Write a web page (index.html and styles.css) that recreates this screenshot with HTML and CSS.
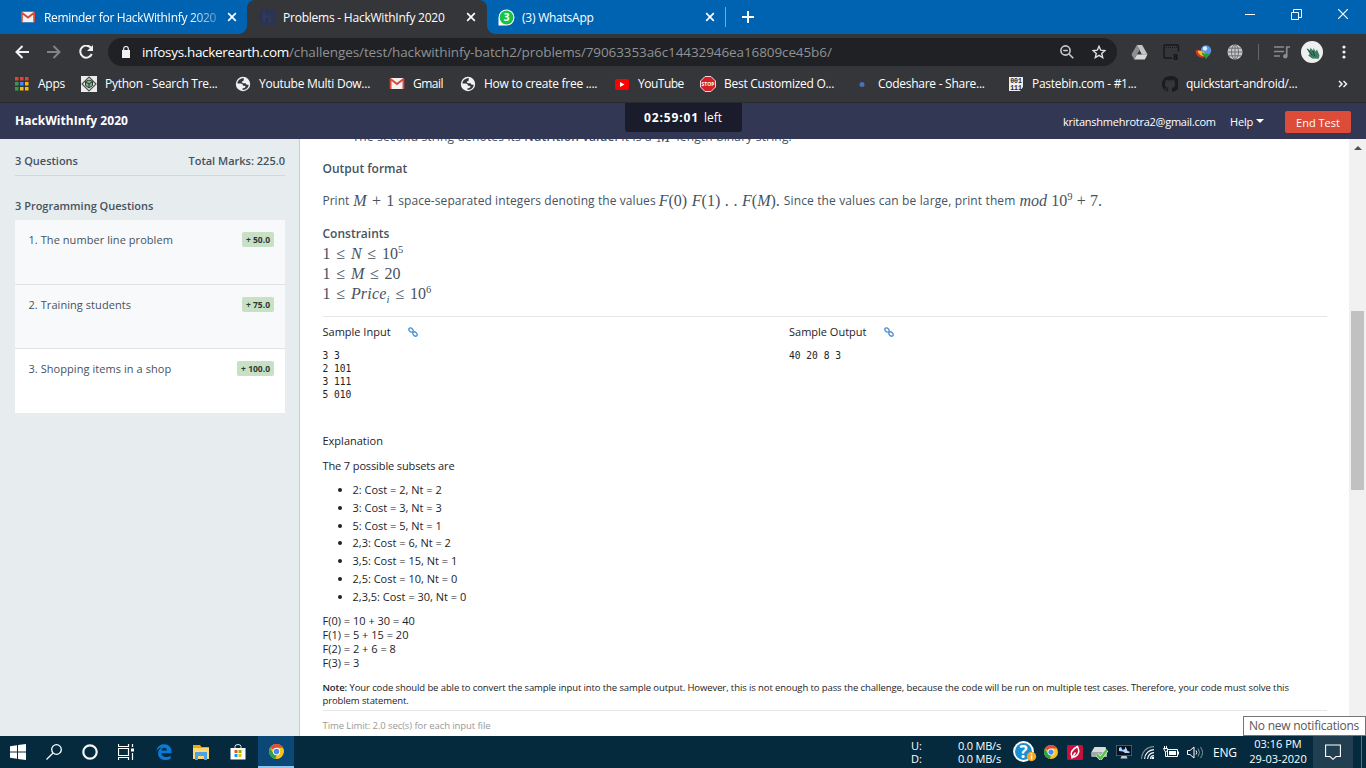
FILE: index.html
```html
<!DOCTYPE html>
<html lang="en">
<head>
<meta charset="utf-8">
<title>Problems - HackWithInfy 2020</title>
<link rel="stylesheet" href="styles.css">
</head>
<body>
<svg class="defs" width="0" height="0">
  <symbol id="gmail" viewBox="0 0 16 12"><path fill="#f2f2f2" d="M1 0h14v12H1z"/><path fill="#d54b3d" d="M0 1.2C0 .5.6 0 1.2 0L8 5.2 14.8 0c.7 0 1.2.5 1.2 1.2V12h-2V3.4L8 8 2 3.4V12H0z"/></symbol>
  <symbol id="x" viewBox="0 0 10 10"><path d="M1.2 1.2l7.6 7.6M8.8 1.2L1.2 8.8" stroke="#fff" stroke-width="1.7"/></symbol>
  <symbol id="globe" viewBox="0 0 16 16"><circle cx="8" cy="8" r="7.2" fill="#f1f1f1"/><path fill="#35363a" d="M9 2.2C5.500 1.800 2.500 4.200 2.400 7.500l3.200.1c1.600 0 2.300.8 2.300 2.100h1.500c1.300 0 1.500 1.500.3 2l-2.200.9v1.300c3.300.1 5.900-2 6.200-5.200-1.500.5-2.700-.3-3-1.500H8.200C6.300 7 6.500 5.500 7.700 5.300 8.900 5.100 8.500 3.400 9 2.200z"/></symbol>
  <symbol id="chrome" viewBox="0 0 16 16"><circle cx="8" cy="8" r="8" fill="#fbc116"/><path fill="#e24a3b" d="M8 8L1.100 4A8 8 0 0 1 14.900 4H8z"/><path fill="#2ba24c" d="M1.100 4L4.600 10 8 12 6.800 15.900A8 8 0 0 1 1.100 4z"/><circle cx="8" cy="8" r="3.900" fill="#fff"/><circle cx="8" cy="8" r="3" fill="#4688f1"/></symbol>
  <symbol id="link" viewBox="0 0 10 10"><g fill="none" stroke="#4b92d8" stroke-width="1.300"><ellipse cx="3" cy="3" rx="2.500" ry="1.700" transform="rotate(45 3 3)"/><ellipse cx="7" cy="7" rx="2.500" ry="1.700" transform="rotate(45 7 7)"/></g></symbol>
</svg>

<div class="titlebar">
  <div class="tab tab-first"><svg class="fav" width="14" height="12"><use href="#gmail"/></svg><span class="ui fade">Reminder for HackWithInfy 2020</span><svg class="close" width="10" height="10"><use href="#x"/></svg></div>
  <div class="tab tab-active"><svg class="fav" width="16" height="16" viewBox="0 0 16 16"><path fill="#2c3454" d="M0 0h16v16H0z"/><path d="M5 3v10M5 8q6-2 6 1v4" stroke="#353a5c" stroke-width="2" fill="none"/></svg><span class="ui">Problems - HackWithInfy 2020</span><svg class="close" width="10" height="10"><use href="#x"/></svg></div>
  <div class="tab tab-wa"><svg class="fav" width="17" height="17" viewBox="0 0 17 17"><path fill="#fff" d="M.5 16.500V8.500a8 8 0 1 1 8 8z"/><circle cx="8.500" cy="8.500" r="6.900" fill="#19c345"/><text x="8.500" y="12.200" text-anchor="middle" class="wa-count">3</text></svg><span class="ui">(3) WhatsApp</span><svg class="close" width="10" height="10"><use href="#x"/></svg></div>
  <span class="tab-sep"></span>
  <svg class="newtab" width="12" height="12" viewBox="0 0 12 12"><path d="M6 0v12M0 6h12" stroke="#fff" stroke-width="2"/></svg>
  <div class="winctl">
    <svg width="10" height="10"><path d="M0 5.500h10" stroke="#fff"/></svg>
    <svg width="11" height="11"><path d="M.5 3.500h7v7h-7zM2.500 3.500v-3h8v8h-3" fill="none" stroke="#fff"/></svg>
    <svg width="10" height="10"><path d="M0 0l10 10M10 0L0 10" stroke="#fff" stroke-width="1.200"/></svg>
  </div>
</div>

<div class="toolbar">
  <svg width="14" height="14" viewBox="0 0 14 14"><path d="M14 7H1.500M7.500 1L1.500 7l6 6" fill="none" stroke="#f1f1f1" stroke-width="2"/></svg>
  <svg class="fwd" width="14" height="14" viewBox="0 0 14 14"><path d="M0 7h12.500M6.500 1l6 6-6 6" fill="none" stroke="#828386" stroke-width="2"/></svg>
  <svg class="reload" width="15" height="14" viewBox="0 0 15 14"><path d="M12.300 3.300A6 6 0 1 0 12.800 9" fill="none" stroke="#f1f1f1" stroke-width="2"/><path d="M14 0v6H8z" fill="#f1f1f1"/></svg>
  <div class="omnibox">
    <svg width="10" height="12" viewBox="0 0 10 12"><path fill="#f1f1f1" d="M1 4h8v8H1z"/><path d="M2.700 4.500V2.800a2.300 2.300 0 0 1 4.600 0v1.700" fill="none" stroke="#f1f1f1" stroke-width="1.200"/></svg>
    <span class="url"><span class="host">infosys.hackerearth.com</span><span class="path">/challenges/test/hackwithinfy-batch2/problems/79063353a6c14432946ea16809ce45b6/</span></span>
    <svg class="zoomi" width="14" height="14" viewBox="0 0 14 14" fill="none" stroke="#c8c9ca" stroke-width="1.600"><circle cx="5.500" cy="5.500" r="4.600"/><path d="M9 9l4.300 4.300M3.200 5.500h4.600"/></svg>
    <svg width="14" height="14" viewBox="0 0 14 14"><path d="M7 1.300l1.700 3.900 4.200.4-3.200 2.800 1 4.200L7 10.400l-3.700 2.200 1-4.200L1.100 5.600l4.200-.4z" fill="none" stroke="#e0e0e0" stroke-width="1.400"/></svg>
  </div>
  <div class="exts">
    <svg width="17" height="15" viewBox="0 0 17 15"><path fill="#c4c4c4" d="M5.800 0h5.400l5.300 9.500h-5.600z"/><path fill="#8e8e8e" d="M5.800 0L.5 9.500 3.200 14.500 8.500 5z"/><path fill="#d8d8d8" d="M6 9.500h10.500l-2.700 5H3.200z"/></svg>
    <svg width="17" height="16" viewBox="0 0 17 16"><rect x="1" y="1" width="14.500" height="13" rx="1" fill="none" stroke="#17181a" stroke-width="1.400"/><path d="M3 3.500h11" stroke="#17181a" stroke-dasharray="1 1"/><path fill="#35363a" d="M9 7.500h8V16H9z"/><text x="10" y="15.700" class="ext8">8</text></svg>
    <svg width="17" height="15" viewBox="0 0 17 15"><circle cx="11" cy="5.500" r="5.200" fill="#5b93dd"/><circle cx="10" cy="3.500" r="2.200" fill="#d8ecff"/><path d="M9.500 12.500C4 13.500 0 9 .8 5.500 3.500 3.800 6 5.500 8 9" fill="#d83422"/><path d="M11 11.500C6 11.500 3 8.500 2.800 6 6 4.800 9 7.500 11 9" fill="#f1c929"/><path d="M6.500 7.500c1.500.5 2.500 1 4 1l5 .5-4.800 5.300-.7-2.800C8 11 7 9.500 6.500 7.500z" fill="#2b9b37"/></svg>
    <svg width="16" height="16" viewBox="0 0 16 16"><circle cx="8" cy="8" r="7.500" fill="#c9c9c9"/><g fill="none" stroke="#66676b" stroke-width=".9"><ellipse cx="8" cy="8" rx="3.500" ry="7.300"/><path d="M8 .5v15M.5 8h15M1.800 4.200h12.400M1.800 11.800h12.400"/></g></svg>
    <span class="ext-sep"></span>
    <svg width="16" height="13" viewBox="0 0 16 13"><path d="M0 1h10M0 5.500h10M0 10h6" stroke="#8b8c8f" stroke-width="1.500"/><path d="M16 1h-3.300v9" stroke="#8b8c8f" stroke-width="1.700" fill="none"/><circle cx="11.300" cy="10.300" r="2.200" fill="#8b8c8f"/></svg>
    <svg class="avatar" width="22" height="22" viewBox="0 0 22 22"><circle cx="11" cy="11" r="11" fill="#eef0ef"/><path fill="#3d7f64" d="M5.500 7l3.500 2.500.5-3L12 10l.5-3 2 3.500 1.500-2 2.500 6-.8 3.200-6.500-.2-4-3 1.500-1.500z"/><path d="M6.500 8l5 6.500M11.500 9.500l2.500 6" stroke="#1b4936"/></svg>
    <svg class="kebab" width="4" height="14" viewBox="0 0 4 14" fill="#f1f1f1"><circle cx="2" cy="2" r="1.600"/><circle cx="2" cy="7" r="1.600"/><circle cx="2" cy="12" r="1.600"/></svg>
  </div>
</div>

<div class="bookmarks">
  <div class="bm bm-apps"><svg width="16" height="16" viewBox="0 0 16 16"><path fill="#e8412e" d="M1 1h3.500v3.500H1zM6 1h3.500v3.500H6zM11 1h3.500v3.500H11z"/><path fill="#2ba14b" d="M1 6h3.500v3.500H1zM1 11h3.500v3.500H1z"/><path fill="#4285f4" d="M6 6h3.500v3.500H6z"/><path fill="#f8b90b" d="M11 6h3.500v3.500H11zM6 11h3.500v3.500H6zM11 11h3.500v3.500H11z"/></svg><span class="ui">Apps</span></div>
  <div class="bm"><svg width="16" height="16" viewBox="0 0 16 16"><path fill="#e9ecea" d="M0 0h16v16H0z"/><path d="M8 1l7 7-7 7-7-7z" fill="none" stroke="#4d514e" stroke-width="1.200"/><path d="M4.500 5.500L8 4l3.500 1.500v4L8 12 4.500 9.500z" fill="#7eae8c" stroke="#28372d"/><path d="M5 6l3 2 3-2M8 8v4" stroke="#263b2c" fill="none"/></svg><span class="ui">Python - Search Tre...</span></div>
  <div class="bm"><svg width="16" height="16"><use href="#globe"/></svg><span class="ui">Youtube Multi Dow...</span></div>
  <div class="bm bm-gmail"><svg width="16" height="11"><use href="#gmail"/></svg><span class="ui">Gmail</span></div>
  <div class="bm"><svg width="16" height="16"><use href="#globe"/></svg><span class="ui">How to create free ....</span></div>
  <div class="bm bm-yt"><svg width="16" height="16" viewBox="0 0 16 16"><rect x="1" y="3" width="14" height="11" rx="2" fill="#f00"/><path fill="#fff" d="M6 6v5l4.500-2.500z"/></svg><span class="ui">YouTube</span></div>
  <div class="bm"><svg width="16" height="16" viewBox="0 0 16 16"><path fill="#d32026" stroke="#f4dada" d="M5 .5h6L15.500 5v6L11 15.500H5L.5 11V5z"/><text x="8" y="10" text-anchor="middle" class="stop">STOP</text></svg><span class="ui">Best Customized O...</span></div>
  <div class="bm"><svg width="16" height="16" viewBox="0 0 16 16"><circle cx="8" cy="8.500" r="2.500" fill="#4a70b8"/></svg><span class="ui">Codeshare - Share...</span></div>
  <div class="bm"><svg width="16" height="16" viewBox="0 0 16 16"><path fill="#eee" d="M1 1h14v10l-3 4H1z"/><text x="8" y="7.300" text-anchor="middle" class="bits">001</text><text x="8" y="13.800" text-anchor="middle" class="bits">111</text></svg><span class="ui">Pastebin.com - #1...</span></div>
  <div class="bm"><svg width="16" height="16" viewBox="0 0 16 16"><path fill="#1b1c1f" d="M8 0C3.580 0 0 3.580 0 8c0 3.540 2.290 6.530 5.470 7.590.4.070.55-.17.55-.38v-1.490c-2.010.370-2.530-.490-2.690-.940-.36-.92-1.130-1.250-.8-1.270 1.200 0 1.500.9 2 1.300.87.500 1.300.4 1.530.200.070-.520.280-.870.510-1.070-1.780-.200-3.640-.890-3.640-3.950 0-.870.310-1.590.820-2.150-.080-.200-.360-1.020.080-2.120 0 0 .670-.210 2.200.820a7.400 7.400 0 0 1 4 0c1.530-1.040 2.200-.820 2.200-.820.440 1.100.160 1.920.080 2.120.510.560.820 1.270.820 2.150 0 3.070-1.870 3.750-3.650 3.950.290.250.540.730.540 1.480v2.190c0 .210.150.460.550.380A8 8 0 0 0 8 0z"/></svg><span class="ui">quickstart-android/...</span></div>
  <svg class="more" width="10" height="8" viewBox="0 0 10 8"><path d="M1 1l3 3-3 3M5.500 1l3 3-3 3" fill="none" stroke="#f1f1f1" stroke-width="1.500"/></svg>
</div>

<div class="apphead">
  <b class="brand">HackWithInfy 2020</b>
  <div class="timer"><b>02:59:01</b><span>left</span></div>
  <span class="mail">kritanshmehrotra2@gmail.com</span>
  <span class="help">Help</span><i class="caret"></i>
  <span class="end">End Test</span>
</div>

<div class="main">
  <aside class="side">
    <div class="totals"><span>3 Questions</span><span>Total Marks: 225.0</span></div>
    <div class="group">3 Programming Questions</div>
    <div class="q"><span>1. The number line problem</span><span class="badge">+ 50.0</span></div>
    <div class="q"><span>2. Training students</span><span class="badge">+ 75.0</span></div>
    <div class="q q-on"><span>3. Shopping items in a shop</span><span class="badge">+ 100.0</span></div>
  </aside>
  <article class="doc">
    <div class="line cut"><span>The second string denotes its </span><b>Nutrition value.</b><span> It is a </span><i class="m">M</i><span>-length binary string.</span></div>
    <div class="line h outfmt">Output format</div>
    <div class="line print"><span>Print</span><span class="m m1"><i>M</i> + 1</span><span class="t2">space-separated integers denoting the values</span><span class="m m2"><i>F</i>(0) <i>F</i>(1) . . <i>F</i>(<i>M</i>).</span><span class="t3">Since the values can be large, print them</span><span class="m m3"><i class="mod">mod</i> 10<sup>9</sup> + 7.</span></div>
    <div class="line h constr">Constraints</div>
    <div class="line"><span class="m">1 ≤ <i>N</i> ≤ 10<sup>5</sup></span></div>
    <div class="line"><span class="m">1 ≤ <i>M</i> ≤ 20</span></div>
    <div class="line"><span class="m">1 ≤ <i class="price">Price<sub>i</sub></i> ≤ 10<sup>6</sup></span></div>
    <hr class="rule">
    <div class="samples">
      <div><div class="shead"><span>Sample Input</span><svg width="10" height="10"><use href="#link"/></svg></div><pre>3 3
2 101
3 111
5 010</pre></div>
      <div><div class="shead"><span>Sample Output</span><svg width="10" height="10"><use href="#link"/></svg></div><pre>40 20 8 3</pre></div>
    </div>
    <div class="exph">Explanation</div>
    <div class="exp">The 7 possible subsets are</div>
    <ul class="subs">
      <li>2: Cost = 2, Nt = 2</li>
      <li>3: Cost = 3, Nt = 3</li>
      <li>5: Cost = 5, Nt = 1</li>
      <li>2,3: Cost = 6, Nt = 2</li>
      <li>3,5: Cost = 15, Nt = 1</li>
      <li>2,5: Cost = 10, Nt = 0</li>
      <li>2,3,5: Cost = 30, Nt = 0</li>
    </ul>
    <div class="fs">F(0) = 10 + 30 = 40<br>F(1) = 5 + 15 = 20<br>F(2) = 2 + 6 = 8<br>F(3) = 3</div>
    <div class="note"><b>Note:</b> Your code should be able to convert the sample input into the sample output. However, this is not enough to pass the challenge, because the code will be run on multiple test cases. Therefore, your code must solve this<br>problem statement.</div>
    <hr class="rule rule2">
    <div class="limit">Time Limit: 2.0 sec(s) for each input file</div>
  </article>
  <div class="scroll"><i class="up"></i><i class="thumb"></i></div>
</div>

<div class="taskbar">
  <svg class="win" width="16" height="16" viewBox="0 0 16 16"><path fill="#fff" d="M0 2.200L7 1.200V7.500H0zM8 1L16 0v7.500H8zM0 8.500h7v6.300l-7-1zM8 8.500h8V16l-8-1.100z"/></svg>
  <svg width="16" height="16" viewBox="0 0 16 16" fill="none" stroke="#fff" stroke-width="1.300"><circle cx="10.500" cy="5.500" r="4.800"/><path d="M7 9l-6.500 6.500"/></svg>
  <svg width="16" height="16" viewBox="0 0 16 16"><circle cx="8" cy="8" r="6.700" fill="none" stroke="#f3f5f6" stroke-width="2.200"/></svg>
  <svg width="17" height="16" viewBox="0 0 17 16" fill="none" stroke="#fff"><path d="M.5 0v2.500h10V0M.5 4.500h10v7H.5zM.5 16v-2.500h10V16M14.500 0v3M14.500 9v7" stroke-width="1.200"/><path fill="#fff" stroke="none" d="M13 4.500h3v3h-3z"/></svg>
  <svg class="nudge" width="16" height="16" viewBox="0 0 16 16"><path fill="#0a7ad8" d="M.4 7.200C1 3 4 .3 8.200.3c4.600 0 7.400 3.200 7.300 7.400v1.600H5.300c.2 2.500 2.200 3.700 4.700 3.700 1.800 0 3.300-.5 4.600-1.300v3.100c-1.500.8-3.300 1.200-5.200 1.200-4.500 0-7.300-2.600-7.300-6.500 0-2.900 1.500-4.900 3.800-6C3.500 3.600 1.700 5 .4 7.200zM5.400 6.500h5.500c0-1.700-.9-2.800-2.600-2.800S5.700 4.900 5.400 6.500z"/></svg>
  <svg class="nudge" width="16" height="15" viewBox="0 0 16 15"><path fill="#eba914" d="M0 0h7l1.500 2H16v12H0z"/><path fill="#ffd76e" d="M0 3h16v11H0z"/><path fill="#4ba3e3" d="M2 7h12v8h-3v-4H5v4H2z"/></svg>
  <svg class="nudge" width="16" height="16" viewBox="0 0 16 16"><path d="M5 5V2.500q0-2 3-2t3 2V5" fill="none" stroke="#dfe6e9"/><path fill="#fff" d="M.5 4h15v11.500H.5z"/><path fill="#f25022" d="M4.500 6H7.500v3h-3z"/><path fill="#7fba00" d="M8.500 6h3v3h-3z"/><path fill="#00a4ef" d="M4.500 10h3v3h-3z"/><path fill="#ffb900" d="M8.500 10h3v3h-3z"/></svg>
  <span class="active-app"><svg width="15" height="15"><use href="#chrome"/></svg></span>
  <div class="net"><span>U:<br>D:</span><span class="rate">0.0 MB/s<br>0.0 MB/s</span></div>
  <div class="tray">
    <svg width="24" height="22" viewBox="0 0 24 22"><circle cx="10.500" cy="10.500" r="10.400" fill="#fff"/><circle cx="10.500" cy="10.500" r="8.500" fill="#1590d4"/><text x="10.500" y="16.500" text-anchor="middle" class="qm">?</text><circle cx="18.500" cy="15.500" r="4.700" fill="#f5a623"/><path d="M18.500 12v1.500M18.500 14.500v4" stroke="#fff" stroke-width="1.500"/></svg>
    <svg class="t-chrome" width="14" height="14"><use href="#chrome"/></svg>
    <svg class="t-red" width="16" height="15" viewBox="0 0 16 15"><rect width="16" height="15" rx="1.500" fill="#c4103a"/><path d="M10.500 1.500C4.500 4.500 3 8 5 12.300c5.500-.3 8.500-5 5.500-10.800zM4.500 13.500l4-6" fill="none" stroke="#fff" stroke-width="1.500"/></svg>
    <svg class="t-drive" width="17" height="15" viewBox="0 0 17 15"><path fill="#d8dadb" d="M3.500 2h11L16 7v4H.5V7z"/><path fill="#a4a8ab" d="M.5 7H16v5H.5z"/><path d="M6 9.500l3.500 4L15.800 5" fill="none" stroke="#fff" stroke-width="3.600"/><path d="M6 9.500l3.500 4L15.800 5" fill="none" stroke="#4cc642" stroke-width="2.600"/></svg>
    <svg class="t-mon" width="16" height="14" viewBox="0 0 16 14"><path fill="#5f6f7e" d="M0 0h16v11H0z"/><path fill="#07121f" d="M.7.7h14.600v9.600H.7z"/><path fill="#a9d5ff" d="M3 6V3l2-1 1.500 3L9 4V1.500l1.500 2 1 2.500 2 .5V8H9L7 6.500z"/><path fill="#c7cdd2" d="M5.500 11h5l1 2.500h-7z"/></svg>
    <svg class="t-wifi" width="13" height="13" viewBox="0 0 13 13" fill="none" stroke="#fff" stroke-width="1.100"><path d="M.6 13C.6 6 6 .6 13 .6" stroke="#8396a1"/><path d="M3.600 13C3.600 8 8 3.600 13 3.600M6.600 13c0-3.500 3-6.400 6.400-6.400M9.500 13c0-2 1.500-3.500 3.500-3.500"/><circle cx="12" cy="12" r="1" fill="#fff"/></svg>
    <svg class="t-bat" width="16" height="12" viewBox="0 0 16 12"><path d="M4.500 3.500h10v7h-10z" fill="none" stroke="#fff"/><path fill="#fff" d="M6 5h7v4H6zM15 5.500h1v3h-1z"/><path d="M1.500 0v2M3.500 0v2M.5 2.500h4v2l-2 1.500zM2.500 6v4.500H5" fill="none" stroke="#fff"/></svg>
    <svg class="t-vol" width="17" height="13" viewBox="0 0 17 13" fill="none" stroke="#fff"><path d="M.5 4.500H3l4-3.500v11L3 8.500H.5z"/><path d="M9 4.500q1.500 2 0 4"/><path d="M11 2.500q3 4 0 8M13.500 1q4 5.500 0 11" stroke="#8396a1"/></svg>
    <span class="ui lang">ENG</span>
    <span class="clock">03:16 PM<br>29-03-2020</span>
    <span class="action"><svg width="16" height="16" viewBox="0 0 16 16"><path d="M.6 1h14.800v11.500H11L8 15.300 5 12.500H.6z" fill="none" stroke="#fff" stroke-width="1.100"/></svg></span>
    <span class="desk"></span>
  </div>
</div>
<div class="tip">No new notifications</div>
</body>
</html>
```
FILE: styles.css
```css
* { box-sizing: border-box; }
body { margin: 0; width: 1366px; height: 768px; overflow: hidden; display: flex; flex-direction: column; background: #fff; font-family: "Open Sans", "Noto Sans", sans-serif; font-size: 12px; }
svg { display: block; flex: none; }
span, b { white-space: nowrap; }
.defs { position: absolute; }
.ui { font-size: 12px; color: #fff; letter-spacing: -.27px; }

/* tab strip */
.titlebar { height: 34px; flex: none; background: #0063b1; display: flex; }
.tab { width: 240px; height: 34px; display: flex; align-items: center; }
.tab .close { margin-left: auto; }
.tab-first { width: 247px; padding: 0 10px 0 21px; background: radial-gradient(circle at 0 0, #0063b1 7.500px, #35363a 8px) 100% 100% / 8px 8px no-repeat; }
.tab-first .fav { margin-right: 9px; }
.tab-active { background: #35363a; border-radius: 8px 8px 0 0; padding: 0 11px 0 12px; }
.tab-active .fav { margin-right: 8px; }
.tab-active .ui, .tab-wa .ui { letter-spacing: -.23px; }
.tab-wa { padding: 0 12px 0 11px; background: radial-gradient(circle at 100% 0, #0063b1 7.500px, #35363a 8px) 0 100% / 8px 8px no-repeat; }
.tab-wa .fav { margin-right: 7px; }
.fade { letter-spacing: -.32px; -webkit-mask-image: linear-gradient(90deg, #000 145px, rgba(0,0,0,.35) 172px); mask-image: linear-gradient(90deg, #000 145px, rgba(0,0,0,.35) 172px); }
.wa-count { font: bold 10px "Open Sans", sans-serif; fill: #fff; }
.tab-sep { width: 1px; height: 20px; background: #79a9d6; margin: 7px 16px 0 -2px; }
.newtab { margin-top: 11px; }
.winctl { margin-left: auto; display: flex; gap: 36px; padding: 9px 18px 0 0; }

/* address bar */
.toolbar { height: 36px; flex: none; background: #35363a; display: flex; align-items: center; padding-left: 15px; }
.fwd, .reload { margin-left: 18px; }
.omnibox { width: 1009px; height: 28px; margin-left: 14px; border-radius: 14px; background: #202124; display: flex; align-items: center; padding: 0 11px 0 13px; }
.url { margin-left: 11px; font-size: 13.500px; line-height: 20px; display: flex; }
.host { color: #fff; letter-spacing: -.32px; }
.path { color: #8f9194; letter-spacing: -.1px; }
.zoomi { margin-left: auto; margin-right: 18px; }
.exts { display: flex; align-items: center; flex: 1; gap: 15px; padding-left: 14px; }
.ext8 { font: bold 9px "Open Sans", sans-serif; fill: #111; }
.ext-sep { width: 1px; height: 16px; background: #65666a; }
.avatar { margin-left: -4px; }
.kebab { margin-left: 4px; }

/* bookmarks */
.bookmarks { height: 33px; flex: none; background: #35363a; border-bottom: 1px solid #28292c; display: flex; align-items: center; padding: 0 0 5px 14px; }
.bm { width: 154px; display: flex; align-items: center; gap: 8px; }
.bm-apps { width: 67px; }
.bm-gmail { width: 71px; }
.bm-yt { width: 86px; }
.bm-gmail .ui, .bm-yt .ui { letter-spacing: -.5px; }
.stop { font: bold 5px "Open Sans", sans-serif; fill: #fff; }
.bits { font: bold 6.500px "Liberation Mono", monospace; fill: #222; }
.more { margin-left: 22px; }

/* test header */
.apphead { height: 36px; flex: none; background: #323754; color: #fff; display: flex; align-items: center; padding: 0 15px; }
.brand { width: 610px; line-height: 20px; margin-top: -1px; letter-spacing: .040px; }
.timer { width: 117px; height: 29px; align-self: flex-start; background: #1b1c2b; border-radius: 0 0 3px 3px; display: flex; align-items: center; gap: 5px; padding-left: 19px; }
.timer b { letter-spacing: .87px; }
.mail { margin-left: 321px; width: 167px; font-size: 11px; letter-spacing: -.25px; }
.help { font-size: 11px; letter-spacing: -.2px; }
.caret { border: 4px solid transparent; border-top-color: #fff; border-bottom: 0; margin-left: 3px; }
.end { margin-left: auto; width: 66px; height: 22px; margin-top: 2px; border-radius: 2px; background: #dd4b39; display: flex; align-items: center; justify-content: center; font-size: 11px; }

/* question list */
.main { height: 597px; flex: none; display: flex; }
.side { width: 300px; background: #e7ecee; border-right: 1px solid #c9ced3; padding: 11px 14px 0 15px; color: #45525f; font-size: 11px; }
.totals { height: 26px; border-bottom: 1px solid #d3d8da; display: flex; justify-content: space-between; font-weight: 600; line-height: 22px; }
.group { font-weight: 600; line-height: 20px; margin-top: 20px; }
.q { height: 64px; background: #f8f9fb; border-bottom: 1px solid #e1e3e5; padding: 12px 11px 0 13.500px; display: flex; justify-content: space-between; line-height: 16px; letter-spacing: .060px; }
.group + .q { margin-top: 4px; height: 65px; }
.q-on { background: #fff; border: 0; }
.badge { height: 15px; border-radius: 2px; background: #c8e1c6; color: #2b3a33; font-weight: 700; font-size: 8.500px; line-height: 15px; letter-spacing: 0; padding: 0 4px; }

/* problem statement */
.doc { flex: 1; overflow: hidden; padding: 0 22px 0 22.500px; color: #1c2329; }
.line { height: 20px; line-height: 20px; color: #46535f; font-size: 12px; display: flex; }
.line span, .line b, .line i { white-space: pre; }
.cut { margin-top: -12px; padding-left: 30px; letter-spacing: .17px; }
.cut b { font-weight: 600; }
.cut .m { margin: 0 2px; }
.h { font-weight: 600; }
.outfmt, .print { margin-top: 12px; }
.constr { margin-top: 13px; }
.m { font-family: "Liberation Serif", serif; font-size: 16px; word-spacing: 1.800px; }
.m sup, .m sub { font-size: 10.500px; line-height: 0; }
.price { letter-spacing: .2px; }
.m1, .t2, .m2, .t3, .m3 { margin-left: 4px; }
.m1 { word-spacing: 1.300px; }
.m2 { word-spacing: .600px; margin-left: 3px; }
.m3 { word-spacing: .200px; }
.t2 { letter-spacing: .080px; }
.t3 { letter-spacing: .130px; }
.rule { border: 0; height: 1px; background: #e6e6e6; margin: 12px 0 0; }
.samples { display: flex; margin-top: 5px; height: 109px; }
.samples > div { width: 466.500px; }
.shead { height: 20px; line-height: 20px; display: flex; align-items: center; gap: 17px; font-size: 11px; }
.samples pre { margin: 7px 0 0; font: 9.600px/13px "DejaVu Sans Mono", monospace; }
.exph { line-height: 20px; font-size: 11px; }
.exp { line-height: 18px; margin-top: 6px; font-size: 11px; letter-spacing: -.12px; }
.subs { margin: 6px 0 0; padding-left: 30px; line-height: 17.830px; font-size: 11px; }
.fs { margin-top: 8px; line-height: 14px; font-size: 11px; }
.note { margin-top: 11px; line-height: 13px; font-size: 9.500px; letter-spacing: -.1px; white-space: nowrap; }
.note b { font-weight: 600; }
.rule2 { margin-top: 3px; }
.limit { margin-top: 5px; line-height: 20px; font-size: 9.500px; letter-spacing: -.09px; color: #999; }
.scroll { width: 17px; background: #f1f1f1; display: flex; flex-direction: column; align-items: center; }
.up { border: 4px solid transparent; border-bottom-color: #505050; border-top: 0; margin-top: 7px; }
.thumb { width: 13px; height: 179px; background: #c1c1c1; margin-top: 161px; }

/* desktop taskbar */
.taskbar { height: 32px; flex: none; background: #062a3d; display: flex; align-items: center; padding-left: 10px; gap: 20px; }
.nudge { margin-left: 1px; }
.active-app { width: 36px; height: 32px; background: #0b4777; border-bottom: 2px solid #8fc4ef; display: flex; align-items: center; justify-content: center; margin-left: -8px; }
.net { color: #fff; display: flex; line-height: 13px; font-size: 11px; margin-left: 597px; width: 90px; justify-content: space-between; }
.rate { letter-spacing: -.2px; }
.tray { display: flex; align-items: center; margin-left: -8px; }
.qm { font: bold 17px "Open Sans", sans-serif; fill: #fff; }
.t-chrome { margin-left: 7px; }
.t-red { margin-left: 9px; }
.t-drive { margin-left: 8px; }
.t-mon { margin-left: 8px; }
.t-wifi { margin-left: 9px; }
.t-bat { margin-left: 9px; }
.t-vol { margin-left: 8px; }
.lang { margin-left: 9px; width: 36px; }
.clock { width: 58px; text-align: center; color: #fff; line-height: 15.500px; font-size: 11px; margin-top: -2px; }
.action { width: 40px; height: 32px; margin-left: 6px; background: #213f50; display: flex; align-items: center; justify-content: center; }
.desk { width: 1px; height: 32px; background: #56707f; margin-left: 8px; }
.tip { position: absolute; left: 1243px; top: 716px; width: 123px; height: 20px; background: #fff; border: 1px solid #767676; color: #575757; font-size: 12px; letter-spacing: -.24px; line-height: 18px; padding-left: 5px; white-space: nowrap; }
```
